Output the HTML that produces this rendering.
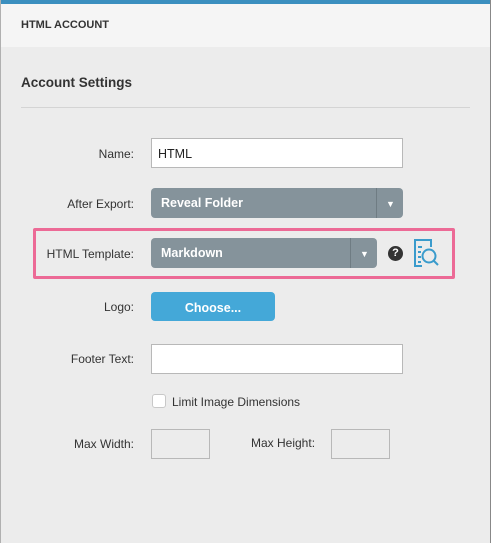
<!DOCTYPE html>
<html><head><style>
*{box-sizing:border-box;margin:0;padding:0}
body{width:491px;height:543px;background:#ececec;font-family:"Liberation Sans",Arial,sans-serif;position:relative;overflow:hidden;color:#333}
.a{position:absolute}
.lbl{position:absolute;font-size:12px;color:#333;text-align:right;width:134px;left:0}
.inp{position:absolute;background:#fff;border:1px solid #b8b8b8}
.sel{position:absolute;background:#85939b;border-radius:4px;color:#fff;font-weight:bold;font-size:12.5px;padding-left:10px}
.sel .d{position:absolute;top:0;bottom:0;width:1px;background:#6f7c83}
.sel .t{position:absolute;font-size:9px;color:#fff}
</style></head><body>
<div class="a" style="left:0;top:0;width:491px;height:4px;background:#3b8fbf"></div>
<div class="a" style="left:0;top:4px;width:491px;height:43px;background:#f5f5f5"></div>
<div class="a" style="left:0;top:0;width:1px;height:543px;background:#b0b0b0"></div>
<div class="a" style="left:490px;top:0;width:1px;height:543px;background:#888"></div>
<div class="a" style="left:21px;top:19px;font-size:11px;font-weight:bold;color:#333">HTML ACCOUNT</div>
<div class="a" style="left:21px;top:75px;font-size:13.5px;font-weight:bold;color:#333">Account Settings</div>
<div class="a" style="left:21px;top:107px;width:449px;height:1px;background:#d4d4d4"></div>

<div class="lbl" style="top:147px">Name:</div>
<div class="inp" style="left:151px;top:138px;width:252px;height:30px;font-size:12.5px;padding:8px 0 0 6px;color:#222">HTML</div>

<div class="lbl" style="top:197px">After Export:</div>
<div class="sel" style="left:151px;top:188px;width:252px;height:30px;line-height:31px">Reveal Folder<div class="d" style="left:225px"></div><div class="t" style="left:235px;top:1px">▼</div></div>

<div class="a" style="left:33px;top:228px;width:422px;height:51px;border:3px solid #ec6a96;border-radius:2px"></div>
<div class="lbl" style="top:247px">HTML Template:</div>
<div class="sel" style="left:151px;top:238px;width:226px;height:30px;line-height:31px">Markdown<div class="d" style="left:199px"></div><div class="t" style="left:209px;top:1px">▼</div></div>
<div class="a" style="left:388px;top:246px;width:15px;height:15px;border-radius:50%;background:#333;color:#fff;font-size:11px;font-weight:bold;text-align:center;line-height:15px">?</div>
<svg class="a" style="left:412px;top:239px" width="28" height="30" viewBox="0 0 28 30" fill="none" stroke="#3a9bcc" stroke-width="2">
<path d="M10 27H3V1h16v7"/><path d="M6 8h4M6 13h3M6 18h3M6 23h3"/>
<circle cx="17" cy="17" r="6.5"/><path d="M21.5 21.5L26 26"/></svg>

<div class="lbl" style="top:300px">Logo:</div>
<div class="a" style="left:151px;top:292px;width:124px;height:29px;background:#44a8d8;border-radius:4px;color:#fff;font-weight:bold;font-size:12.5px;text-align:center;line-height:32px">Choose...</div>

<div class="lbl" style="top:352px">Footer Text:</div>
<div class="inp" style="left:151px;top:344px;width:252px;height:30px"></div>

<div class="a" style="left:152px;top:394px;width:14px;height:14px;background:#fff;border:1px solid #c8c8c8;border-radius:3px"></div>
<div class="a" style="left:172px;top:395px;font-size:12px">Limit Image Dimensions</div>

<div class="lbl" style="top:437px">Max Width:</div>
<div class="inp" style="left:151px;top:429px;width:59px;height:30px;background:#ececec"></div>
<div class="a" style="left:251px;top:436px;font-size:12px">Max Height:</div>
<div class="inp" style="left:331px;top:429px;width:59px;height:30px;background:#ececec"></div>
</body></html>
